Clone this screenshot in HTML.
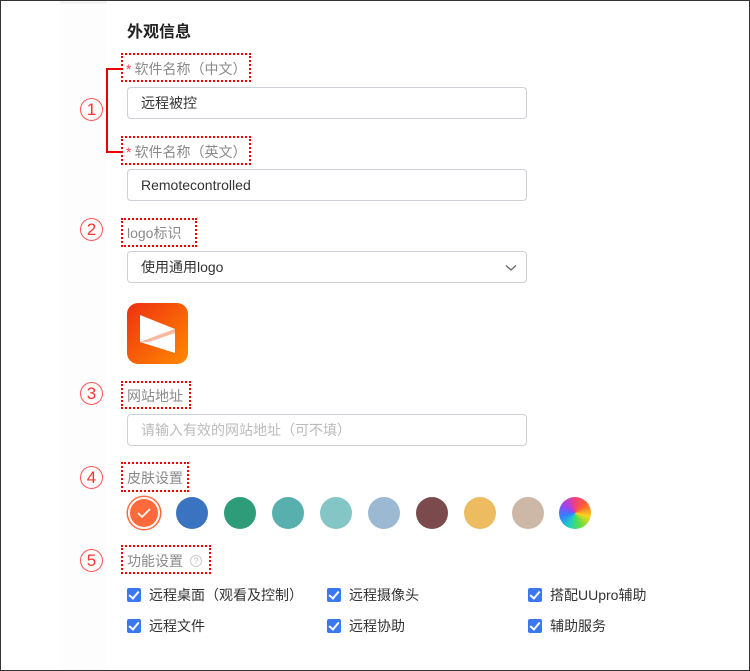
<!DOCTYPE html>
<html><head><meta charset="utf-8"><style>
*{box-sizing:border-box;margin:0;padding:0}
body{width:750px;height:671px;position:relative;background:#fff;font-family:"Liberation Sans","Noto Sans CJK SC",sans-serif;overflow:hidden}
.frame{position:absolute;left:0;top:0;width:750px;height:671px;border:1px solid #333;z-index:5;pointer-events:none}
.side{position:absolute;left:60px;top:0;width:47px;height:671px;background:#fdfdfd}
.side2{position:absolute;left:60px;top:0;width:47px;height:4px;background:#f3f3f3}
.a{position:absolute}
.title{left:127px;top:18px;font-size:16px;font-weight:bold;color:#222}
.box{position:absolute;border:2px dotted #e00}
.lbl{position:absolute;font-size:14px;color:#8a8a8a;white-space:nowrap}
.lbl .s{color:#f04060;margin-right:3px}
.inp{position:absolute;left:127px;width:400px;height:32px;border:1px solid #cdd0d6;border-radius:4px;font-size:14px;color:#333;padding-left:13px;line-height:30px}
.ph{color:#bbb}
.num{position:absolute;width:23px;height:23px;border:1px solid #f55;border-radius:50%;color:#f33;font-size:17px;text-align:center;line-height:21px}
.sw{position:absolute;top:497px;width:32px;height:32px;border-radius:50%}
.cb{position:absolute;font-size:14px;color:#333;white-space:nowrap;line-height:16px}
.cb i{position:absolute;left:-22px;top:1px;width:14px;height:14px;background:#3b78f0;border-radius:2px}
.cb i:after{content:"";position:absolute;left:4px;top:1px;width:4px;height:8px;border:solid #fff;border-width:0 2px 2px 0;transform:rotate(40deg)}
</style></head><body>
<div class="side"></div><div class="side2"></div>
<div class="a title">外观信息</div>

<div class="a" style="left:106px;top:68px;width:15px;height:85px;border:2px solid #e00;border-right:none"></div>
<div class="num" style="left:80px;top:98px">1</div>
<div class="box" style="left:121px;top:53px;width:130px;height:29px"></div>
<div class="lbl" style="left:126px;top:59px"><span class="s">*</span>软件名称（中文）</div>
<div class="inp" style="top:87px">远程被控</div>
<div class="box" style="left:121px;top:136px;width:130px;height:29px"></div>
<div class="lbl" style="left:126px;top:142px"><span class="s">*</span>软件名称（英文）</div>
<div class="inp" style="top:169px">Remotecontrolled</div>

<div class="num" style="left:80px;top:218px">2</div>
<div class="box" style="left:121px;top:218px;width:76px;height:29px"></div>
<div class="lbl" style="left:127px;top:223px">logo标识</div>
<div class="inp" style="top:251px">使用通用logo
<svg style="position:absolute;right:9px;top:12px" width="12" height="8" viewBox="0 0 12 8"><path d="M1 1.5L6 6L11 1.5" fill="none" stroke="#666" stroke-width="1.3"/></svg></div>
<div class="a" style="left:127px;top:303px;width:61px;height:61px;border-radius:11px;background:linear-gradient(135deg,#ee3010,#ff8a00)">
<svg width="61" height="61" viewBox="0 0 61 61"><polygon points="13,12 48,26 13,39" fill="#fff"/><polygon points="48,26 48,50 13,39" fill="#fff"/><polygon points="48,26 13,39 22,39 48,30" fill="#f9b9a0"/></svg></div>

<div class="num" style="left:80px;top:382px">3</div>
<div class="box" style="left:121px;top:381px;width:70px;height:28px"></div>
<div class="lbl" style="left:127px;top:386px">网站地址</div>
<div class="inp ph" style="top:414px">请输入有效的网站地址（可不填）</div>

<div class="num" style="left:80px;top:466px">4</div>
<div class="box" style="left:121px;top:462px;width:68px;height:30px"></div>
<div class="lbl" style="left:127px;top:468px">皮肤设置</div>
<div class="sw" style="left:128px;background:#ff6a3c;border:1px solid #fff;box-shadow:0 0 0 1.5px #ff6a3c, inset 0 0 0 1px #fff">
<svg style="position:absolute;left:8px;top:9px" width="14" height="12" viewBox="0 0 14 12"><path d="M1 6L5 10L13 2" fill="none" stroke="#fff" stroke-width="1.6"/></svg></div>
<div class="sw" style="left:176px;background:#3a73c0"></div>
<div class="sw" style="left:224px;background:#2e9c78"></div>
<div class="sw" style="left:272px;background:#58b0ae"></div>
<div class="sw" style="left:320px;background:#84c6c6"></div>
<div class="sw" style="left:368px;background:#9cb9d4"></div>
<div class="sw" style="left:416px;background:#7a4a4c"></div>
<div class="sw" style="left:464px;background:#edbb60"></div>
<div class="sw" style="left:512px;background:#cdb8a8"></div>
<div class="sw" style="left:559px;background:conic-gradient(#f04080,#ff6030,#ffd020,#60e040,#20d0c0,#3080ff,#a040f0,#f04080)"></div>

<div class="num" style="left:80px;top:549px">5</div>
<div class="box" style="left:121px;top:545px;width:90px;height:29px"></div>
<div class="lbl" style="left:127px;top:551px">功能设置</div>
<div class="a" style="left:190px;top:555px;width:12px;height:12px;border:1px solid #ccc;border-radius:50%;font-size:9px;color:#bbb;text-align:center;line-height:10px">?</div>

<div class="cb" style="left:149px;top:587px"><i></i>远程桌面（观看及控制）</div>
<div class="cb" style="left:349px;top:587px"><i></i>远程摄像头</div>
<div class="cb" style="left:550px;top:587px"><i></i>搭配UUpro辅助</div>
<div class="cb" style="left:149px;top:618px"><i></i>远程文件</div>
<div class="cb" style="left:349px;top:618px"><i></i>远程协助</div>
<div class="cb" style="left:550px;top:618px"><i></i>辅助服务</div>
<div class="frame"></div>
</body></html>
